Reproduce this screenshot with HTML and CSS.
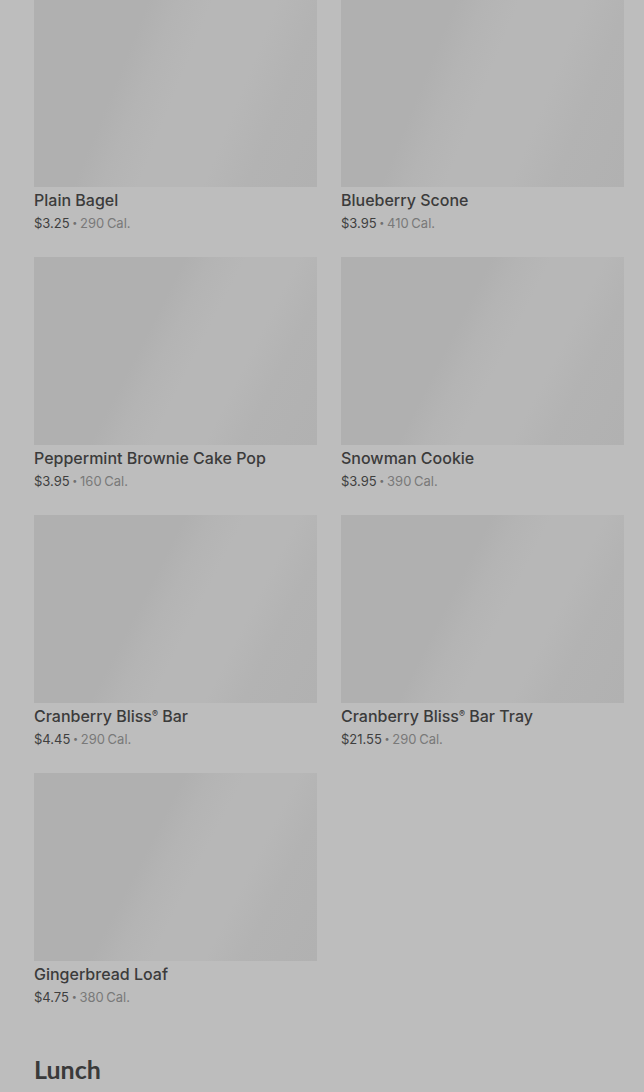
FILE: index.html
```html
<!DOCTYPE html>
<html>
<head>
  <meta charset="utf-8" />
  <meta name="viewport" content="width=device-width, initial-scale=1.0">
  <title>Menu</title>
  <link rel="stylesheet" href="styles.css">
</head>
<body>
  <div class="menu">
    <div class="product-grid">
      <div class="product first-row">
        <div class="product-image"></div>
        <div class="product-name">Plain Bagel</div>
        <div class="product-meta"><span class="price">$3.25</span> <span class="dot">•</span> <span class="cal">290 Cal.</span></div>
      </div>
      <div class="product first-row">
        <div class="product-image"></div>
        <div class="product-name">Blueberry Scone</div>
        <div class="product-meta"><span class="price">$3.95</span> <span class="dot">•</span> <span class="cal">410 Cal.</span></div>
      </div>
      <div class="product">
        <div class="product-image"></div>
        <div class="product-name">Peppermint Brownie Cake Pop</div>
        <div class="product-meta"><span class="price">$3.95</span> <span class="dot">•</span> <span class="cal">160 Cal.</span></div>
      </div>
      <div class="product">
        <div class="product-image"></div>
        <div class="product-name">Snowman Cookie</div>
        <div class="product-meta"><span class="price">$3.95</span> <span class="dot">•</span> <span class="cal">390 Cal.</span></div>
      </div>
      <div class="product">
        <div class="product-image"></div>
        <div class="product-name">Cranberry Bliss<sup>®</sup> Bar</div>
        <div class="product-meta"><span class="price">$4.45</span> <span class="dot">•</span> <span class="cal">290 Cal.</span></div>
      </div>
      <div class="product">
        <div class="product-image"></div>
        <div class="product-name">Cranberry Bliss<sup>®</sup> Bar Tray</div>
        <div class="product-meta"><span class="price">$21.55</span> <span class="dot">•</span> <span class="cal">290 Cal.</span></div>
      </div>
      <div class="product">
        <div class="product-image"></div>
        <div class="product-name">Gingerbread Loaf</div>
        <div class="product-meta"><span class="price">$4.75</span> <span class="dot">•</span> <span class="cal">380 Cal.</span></div>
      </div>
    </div>

    <h2 class="section-title">Lunch</h2>
  </div>
</body>
</html>
```

FILE: styles.css
```css
/* --- Page (dimmed under an overlay) --- */
*, *::before, *::after {
  box-sizing: border-box;
}
body {
  margin: 0;
  background: #bdbdbd;
  color: #3a3a3a;
  font-family: Inter, Roboto, "Liberation Sans", Arial, sans-serif;
  overflow: hidden;
  height: 1092px;
}

.menu {
  padding: 0 20px 0 34px;
}

/* --- Product grid --- */
.product-grid {
  display: grid;
  grid-template-columns: 1fr 1fr;
  column-gap: 24px;
  row-gap: 25px;
}
.product-image {
  height: 188px;
  background: linear-gradient(117deg, #b0b0b0 0%, #b0b0b0 40%, #b4b4b4 47%, #b7b7b7 56%, #b7b7b7 70%, #b3b3b3 80%, #b1b1b1 100%);
}
.first-row .product-image {
  height: 187px;
  background: linear-gradient(112deg, #b0b0b0 0%, #b0b0b0 32%, #b4b4b4 40%, #b7b7b7 50%, #b7b7b7 68%, #b3b3b3 80%, #b1b1b1 100%);
}
.product-name {
  margin-top: 2px;
  height: 22px;
  font-size: 16px;
  line-height: 22px;
  font-weight: 500;
  color: #3b3b3b;
}
.product-name sup {
  font-size: 9px;
  vertical-align: 5px;
  line-height: 0;
}
.product-meta {
  margin-top: 3px;
  height: 18px;
  font-size: 13px;
  line-height: 18px;
  word-spacing: -1px;
}
.price {
  color: #3f3f3f;
}
.dot {
  color: #707070;
  font-size: 9px;
  line-height: 0;
  vertical-align: 2px;
}
.cal {
  color: #797979;
}

/* --- Section heading --- */
.section-title {
  margin: 48px 0 0;
  font-family: Lato, "Open Sans", sans-serif;
  font-size: 25px;
  font-weight: 700;
  line-height: 30px;
  color: #3a3a3a;
}
```
